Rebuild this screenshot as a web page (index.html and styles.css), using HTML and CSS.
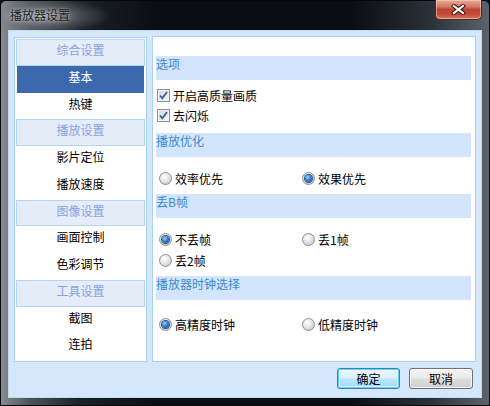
FILE: index.html
```html
<!DOCTYPE html>
<html lang="zh-CN">
<head>
<meta charset="utf-8">
<title>播放器设置</title>
<link rel="stylesheet" href="styles.css">
</head>
<body>
<div class="window">
  <div class="titlebar">
    <span class="title">播放器设置</span>
    <div class="close">
      <svg width="15" height="11" viewBox="0 0 15 11"><path d="M3 2 L12 9 M12 2 L3 9" stroke="#3a1a14" stroke-width="4.2" stroke-linecap="square"/><path d="M3 2 L12 9 M12 2 L3 9" stroke="#ffffff" stroke-width="2.2" stroke-linecap="square"/></svg>
    </div>
  </div>
  <div class="client">
    <div class="panes">
      <nav class="nav">
        <div class="nav-head">综合设置</div>
        <div class="nav-item selected">基本</div>
        <div class="nav-item">热键</div>
        <div class="nav-head">播放设置</div>
        <div class="nav-item">影片定位</div>
        <div class="nav-item">播放速度</div>
        <div class="nav-head">图像设置</div>
        <div class="nav-item">画面控制</div>
        <div class="nav-item">色彩调节</div>
        <div class="nav-head">工具设置</div>
        <div class="nav-item">截图</div>
        <div class="nav-item">连拍</div>
      </nav>
      <div class="content">
        <div class="band">选项</div>
        <div class="group g1">
          <div class="check-row"><span class="checkbox"><svg width="11" height="11" viewBox="0 0 11 11"><path d="M2 5.5 L4.3 8.3 L9 2" fill="none" stroke="#3a5ca6" stroke-width="1.8"/></svg></span>开启高质量画质</div>
          <div class="check-row"><span class="checkbox"><svg width="11" height="11" viewBox="0 0 11 11"><path d="M2 5.5 L4.3 8.3 L9 2" fill="none" stroke="#3a5ca6" stroke-width="1.8"/></svg></span>去闪烁</div>
        </div>
        <div class="band">播放优化</div>
        <div class="group g2">
          <div class="radio-grid">
            <div class="radio-row"><span class="radio"></span>效率优先</div>
            <div class="radio-row"><span class="radio on"></span>效果优先</div>
          </div>
        </div>
        <div class="band">丢B帧</div>
        <div class="group g3">
          <div class="radio-grid">
            <div class="radio-row"><span class="radio on"></span>不丢帧</div>
            <div class="radio-row"><span class="radio"></span>丢1帧</div>
            <div class="radio-row"><span class="radio"></span>丢2帧</div>
          </div>
        </div>
        <div class="band">播放器时钟选择</div>
        <div class="group g4">
          <div class="radio-grid">
            <div class="radio-row"><span class="radio on"></span>高精度时钟</div>
            <div class="radio-row"><span class="radio"></span>低精度时钟</div>
          </div>
        </div>
      </div>
    </div>
    <div class="buttons">
      <button class="btn btn-default">确定</button>
      <button class="btn">取消</button>
    </div>
  </div>
</div>
</body>
</html>
```
FILE: styles.css
```css
* { box-sizing: border-box; }
html, body { margin: 0; padding: 0; }
body {
  width: 490px;
  height: 406px;
  overflow: hidden;
  font-family: "Noto Sans CJK SC", "Liberation Sans", sans-serif;
  font-size: 12px;
  color: #000;
  background: #0d1116;
}
.window {
  width: 490px;
  height: 406px;
  display: flex;
  flex-direction: column;
  border: 1px solid #05070a;
  border-radius: 6px 6px 0 0;
  background:
    linear-gradient(to right, #868b90 0%, #4d5257 6%, #1d2227 16%, #0a0e13 32%, #0a0e13 72%, #2b3138 88%, #5c636b 100%);
}
.titlebar {
  height: 29px;
  display: flex;
  align-items: flex-start;
  background: radial-gradient(ellipse 70px 18px at 40px 15px, rgba(170,176,182,0.85), rgba(120,126,132,0.4) 60%, rgba(0,0,0,0) 100%);
}
.title {
  margin: 6px 0 0 9px;
  line-height: 16px;
  color: #1a1c1f;
  text-shadow: 0 0 3px rgba(255,255,255,0.6);
}
.close {
  margin: -1px 7px 0 auto;
  width: 47px;
  height: 20px;
  border: 1px solid #4a2a22;
  border-top: none;
  border-radius: 0 0 5px 5px;
  background: linear-gradient(#e8aa98 0%, #d27a66 35%, #bf4330 50%, #c44a36 75%, #d9765e 100%);
  box-shadow: inset 0 0 0 1px rgba(255,220,210,0.5);
  display: flex;
  align-items: center;
  justify-content: center;
}
.client {
  margin: 0 7px;
  height: 368px;
  border: 1px solid #c2dbf3;
  background: #d5e7fa;
  padding: 5px 5px 0 5px;
  display: flex;
  flex-direction: column;
}
.panes {
  display: flex;
  gap: 5px;
  height: 326px;
}
.nav {
  width: 133px;
  height: 325px;
  margin-top: 1px;
  border: 1px solid #a9d1f7;
  padding: 1px;
  background: #fff;
  display: grid;
  grid-template-rows: repeat(12, 1fr);
}
.nav-head {
  background: #e4ecf8;
  border: 1px solid #b3d5f8;
  color: #88a3e0;
  text-align: center;
  line-height: 17px;
  padding-top: 1px;
}
.nav-item {
  margin: 0 1px;
  text-align: center;
  line-height: 17px;
  padding-top: 2px;
  color: #000;
}
.nav-item.selected {
  background: #3c68ae;
  color: #fff;
}
.content {
  width: 324px;
  height: 326px;
  border: 1px solid #a9d1f7;
  background: #fff;
  padding: 19px 4px 0 3px;
}
.band {
  height: 24px;
  background: #d3e5fc;
  color: #3b8ad2;
  line-height: 16px;
}
.group { padding-left: 3px; }
.g1 { height: 53px; padding-top: 7px; padding-left: 1px; display: flex; flex-direction: column; gap: 4px; }
.g2 { height: 37px; padding-top: 13px; }
.g3 { height: 58px; padding-top: 13px; }
.g4 { padding-top: 16px; }
.check-row {
  display: flex;
  align-items: center;
  height: 16px;
  gap: 3px;
}
.checkbox {
  width: 13px;
  height: 13px;
  border: 1px solid #8f8f8f;
  background: linear-gradient(135deg, #d6d6d6, #f6f6f6);
  box-shadow: inset 0 0 0 1px #f4f4f4;
  display: flex;
  align-items: center;
  justify-content: center;
}
.radio-grid {
  display: grid;
  grid-template-columns: 143px 1fr;
  row-gap: 5px;
}
.radio-row {
  display: flex;
  align-items: center;
  height: 16px;
  gap: 3px;
}
.radio {
  width: 13px;
  height: 13px;
  border-radius: 50%;
  border: 1px solid #8e8f8f;
  background: radial-gradient(circle at 40% 35%, #ffffff 0%, #e2e2e2 50%, #bdbdbd 100%);
  display: flex;
  align-items: center;
  justify-content: center;
}
.radio.on::after {
  content: "";
  width: 7px;
  height: 7px;
  border-radius: 50%;
  background: radial-gradient(circle at 40% 35%, #9fd8ff 0%, #2f7fd0 45%, #163f82 100%);
  box-shadow: 0 0 0 1px #2a4f86;
}
.buttons {
  display: flex;
  justify-content: flex-end;
  gap: 9px;
  margin-top: 6px;
  padding-right: 3px;
}
.btn {
  width: 64px;
  height: 21px;
  font-family: inherit;
  font-size: 12px;
  color: #000;
  border: 1px solid #707070;
  border-radius: 3px;
  padding: 0;
  background: linear-gradient(#f3f3f3 0%, #ebebeb 48%, #dddddd 52%, #cfcfcf 100%);
  box-shadow: inset 0 0 0 1px rgba(255,255,255,0.7);
}
.btn-default {
  width: 63px;
  border-color: #3c7fb1;
  background: linear-gradient(#eaf7fe 0%, #d9f1fd 48%, #bde6fd 52%, #a6d8f4 100%);
  box-shadow: inset 0 0 0 1px #5fd4fb, inset 0 0 0 2px rgba(255,255,255,0.6);
}
```
